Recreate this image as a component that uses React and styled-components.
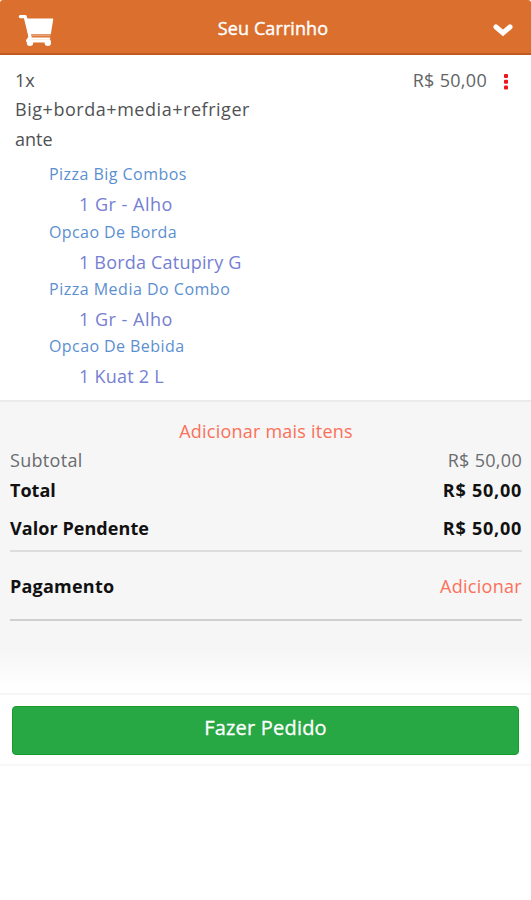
import styled, { createGlobalStyle } from "styled-components";

const groups = [
  { title: "Pizza Big Combos", option: "1 Gr - Alho", titleSpace: 0.46, space: 0.5 },
  { title: "Opcao De Borda", option: "1 Borda Catupiry G", titleSpace: 0.4, space: 0.2 },
  { title: "Pizza Media Do Combo", option: "1 Gr - Alho", titleSpace: 0.5, space: 0.5 },
  { title: "Opcao De Bebida", option: "1 Kuat 2 L", titleSpace: 0.42, space: 0.25 },
];

const App = () => {
  return (
    <Page>
      <GlobalStyle />
      <Header>
        <CartIcon viewBox="0 0 36 33">
          <path
            d="M2.3 2.6H7.2L12.2 23.2L9.6 26.8H31"
            fill="none"
            stroke="#fff"
            strokeWidth="3.2"
            strokeLinecap="round"
            strokeLinejoin="round"
          />
          <path d="M7.2 4.4H34.4Q35.4 4.4 35.2 5.4L32.8 20.2H12.4V23.6H32.4L31.8 25.4H11Z" fill="#fff" />
          <path d="M13 21.6H32.4" stroke="#e7a47b" strokeWidth="1.2" />
          <circle cx="12" cy="28.7" r="3.2" fill="#fff" />
          <circle cx="29.8" cy="28.7" r="3.2" fill="#fff" />
        </CartIcon>
        <Title><Text $space={0.1}>Seu Carrinho</Text></Title>
        <Chevron viewBox="0 0 22 15">
          <path d="M4 4L11 10L18 4" fill="none" stroke="#fff" strokeWidth="5" strokeLinecap="round" />
        </Chevron>
      </Header>
      <Item>
        <ItemTop>
          <ItemName>
            <div><Text>1x</Text></div>
            <div><Text $space={0.54}>Big+borda+media+refriger</Text></div>
            <div><Text>ante</Text></div>
          </ItemName>
          <Price><Text $space={0.3}>R$ 50,00</Text></Price>
          <Dots viewBox="0 0 4 16">
            <rect width="4" height="4" rx="1" />
            <rect y="5.7" width="4" height="4" rx="1" />
            <rect y="11.5" width="4" height="4" rx="1" />
          </Dots>
        </ItemTop>
        <Groups>
          {groups.map((g, i) => (
            <li key={i}>
              <GroupTitle><Text $space={g.titleSpace}>{g.title}</Text></GroupTitle>
              <Option><Text $space={g.space}>{g.option}</Text></Option>
            </li>
          ))}
        </Groups>
      </Item>
      <Summary>
        <AddMore><Text $space={0.22}>Adicionar mais itens</Text></AddMore>
        <Row $color="#6a6c6e">
          <Text $space={0.3}>Subtotal</Text>
          <Text $space={0.3}>R$ 50,00</Text>
        </Row>
        <Row $bold>
          <Text>Total</Text>
          <Text $space={0.75}>R$ 50,00</Text>
        </Row>
        <Row $bold $top={9.5}>
          <Text $space={0.06}>Valor Pendente</Text>
          <Text $space={0.75}>R$ 50,00</Text>
        </Row>
        <Line $top={6} $color="#dcdddd" />
        <Row $bold $top={20}>
          <Text $space={0.22}>Pagamento</Text>
          <Link><Text $space={0.3}>Adicionar</Text></Link>
        </Row>
        <Line $top={18} $color="#cfd0d0" />
      </Summary>
      <Footer>
        <OrderButton><Text $space={0.2}>Fazer Pedido</Text></OrderButton>
      </Footer>
    </Page>
  );
};

export default App;

const GlobalStyle = createGlobalStyle`
  * {
    box-sizing: border-box;
  }

  body {
    margin: 0;
    background: #fff;
  }
`;

const Page = styled.div`
  width: 531px;
  height: 900px;
  overflow: hidden;
  background: #fff;
  color: #505254;
  font-family: "Open Sans", "Noto Sans", sans-serif;
  font-size: 18px;
  line-height: 29.3px;
`;

const Text = styled.span`
  letter-spacing: ${(props) => props.$space || 0}px;
  white-space: nowrap;
`;

const Header = styled.header`
  display: flex;
  align-items: center;
  justify-content: space-between;
  height: 55px;
  padding: 1px 17px 0 18px;
  border-bottom: 2px solid #c05a20;
  border-radius: 3px 3px 0 0;
  background: #db702e;
  color: #fff;
`;

const CartIcon = styled.svg`
  width: 36px;
  height: 33px;
  margin-top: 6px;
`;

const Title = styled.div`
  margin-top: 3px;
  -webkit-text-stroke: 0.4px #fff;
`;

const Chevron = styled.svg`
  width: 22px;
  height: 15px;
  margin-top: 6px;
`;

const Item = styled.section`
  height: 345px;
  padding: 11px 22px 0 15px;
`;

const ItemTop = styled.div`
  display: flex;
`;

const ItemName = styled.div`
  flex: 1;
`;

const Price = styled.div`
  color: #626466;
`;

const Dots = styled.svg`
  width: 4px;
  height: 16px;
  margin: 8px 1px 0 17px;
  fill: #f0141e;
`;

const Groups = styled.ul`
  margin: 6.6px 0 0;
  padding: 0 0 0 34px;
  list-style: none;
`;

const GroupTitle = styled.div`
  font-size: 16px;
  line-height: 28px;
  color: #5c8fd0;
`;

const Option = styled.div`
  padding: 3px 0 0 30px;
  line-height: 26.2px;
  color: #7580d2;
`;

const Summary = styled.section`
  height: 293px;
  padding: 15px 9px 0 10px;
  border-top: 2px solid #ebebeb;
  background: linear-gradient(#f6f6f6 0, #f6f6f6 250px, #fff 288px);
`;

const AddMore = styled.div`
  text-align: center;
  color: #fb705a;
`;

const Row = styled.div`
  display: flex;
  justify-content: space-between;
  margin-top: ${(props) => props.$top || 0}px;
  color: ${(props) => props.$color || "#111"};
  font-weight: ${(props) => (props.$bold ? 700 : 400)};
`;

const Link = styled.span`
  color: #fb705a;
  font-weight: 400;
`;

const Line = styled.div`
  height: 2px;
  margin-top: ${(props) => props.$top}px;
  background: ${(props) => props.$color};
`;

const Footer = styled.footer`
  height: 73px;
  padding: 11px 12px;
  border-top: 2px solid #f6f6f6;
  border-bottom: 2px solid #f8f6f6;
`;

const OrderButton = styled.button`
  display: block;
  width: 100%;
  height: 49px;
  padding: 0 0 5px;
  border: 1px solid #169b2d;
  border-radius: 4px;
  background: #28a745;
  color: #fff;
  font: inherit;
  font-size: 20px;
  -webkit-text-stroke: 0.3px #fff;
`;
